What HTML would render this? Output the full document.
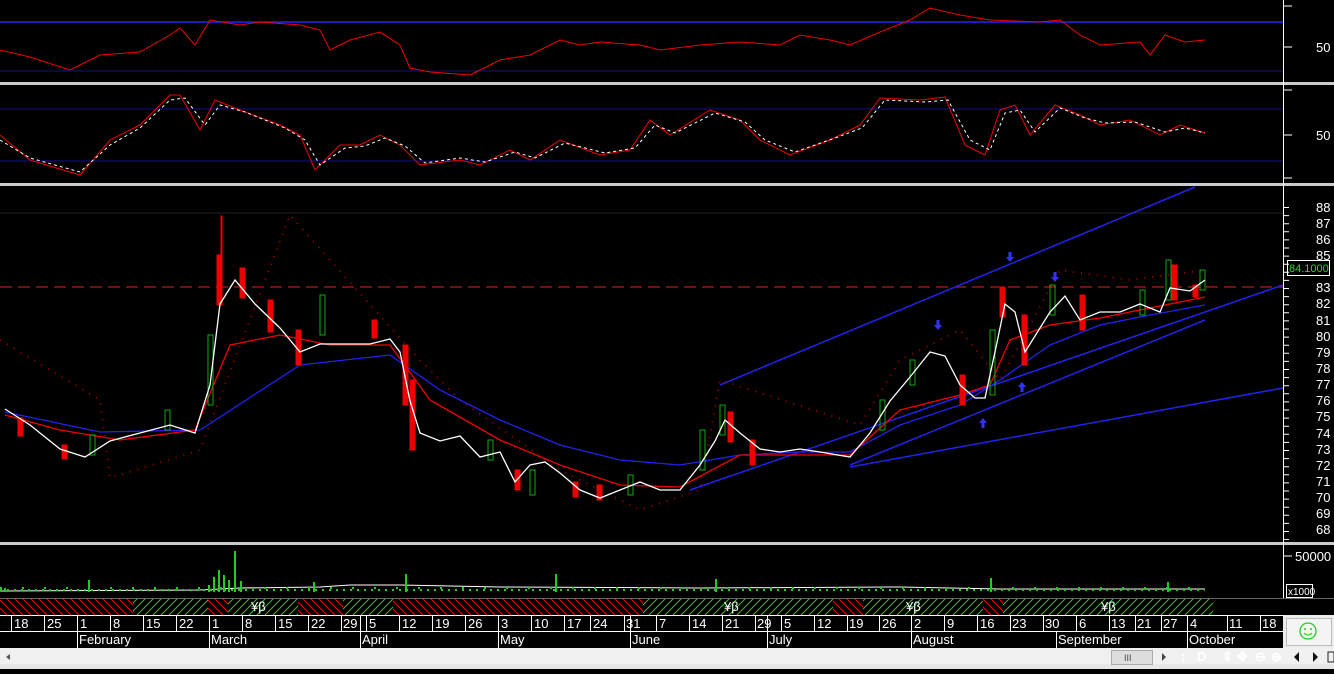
<!DOCTYPE html><html><head><style>
body{margin:0;width:1334px;height:669px;overflow:hidden;background:#000;font-family:"Liberation Sans",sans-serif}
svg text{font-family:"Liberation Sans",sans-serif;font-size:13px;fill:#fff}
</style></head><body>
<svg width="1334" height="669" viewBox="0 0 1334 669" xmlns="http://www.w3.org/2000/svg">
<defs>
<pattern id="hr" width="8" height="8" patternUnits="userSpaceOnUse"><rect width="8" height="8" fill="#000"/><path d="M0 0L8 8M-4 4L4 12M4 -4L12 4" stroke="#e00" stroke-width="1"/></pattern>
<pattern id="hg" width="8" height="8" patternUnits="userSpaceOnUse"><rect width="8" height="8" fill="#000"/><path d="M8 0L0 8M4 -4L-4 4M12 4L4 12" stroke="#2c2" stroke-width="1"/></pattern>
<g id="ad"><path d="M-1.5 0H1.5V5H4L0 10L-4 5H-1.5Z" fill="#33f"/></g>
</defs>
<rect width="1334" height="669" fill="#000"/>
<rect x="0" y="82" width="1334" height="3" fill="#ccc"/>
<rect x="0" y="183" width="1334" height="3" fill="#ccc"/>
<rect x="0" y="542" width="1334" height="3" fill="#ccc"/>
<line x1="1283.5" y1="0" x2="1283.5" y2="598" stroke="#fff"/>
<line x1="0" y1="22" x2="1283" y2="22" stroke="#22f" stroke-width="1.5"/>
<line x1="0" y1="71" x2="1283" y2="71" stroke="#118"/>
<polyline fill="none" stroke="#e00" points="0,50 30,57 70,70 100,55 140,52 170,35 180,28 195,45 210,20 240,25 260,22 300,25 320,30 330,50 350,40 380,32 400,45 410,68 430,72 470,75 500,60 530,55 560,40 580,45 600,42 640,45 660,50 700,45 740,42 780,45 800,35 830,40 850,45 880,32 910,20 930,8 960,15 990,20 1040,22 1060,20 1080,35 1100,45 1140,42 1150,55 1165,35 1185,42 1205,40"/>
<text x="1316" y="52">50</text>
<line x1="0" y1="109" x2="1283" y2="109" stroke="#118"/>
<line x1="0" y1="161" x2="1283" y2="161" stroke="#118"/>
<polyline fill="none" stroke="#e00" points="0,135 30,160 80,175 110,140 140,125 170,95 180,95 200,130 215,100 240,110 280,125 300,135 315,170 340,145 360,145 380,135 400,145 420,165 460,160 480,165 510,150 530,160 560,140 600,155 630,150 650,120 670,135 710,110 740,120 760,140 790,155 830,140 860,125 880,98 920,100 945,97 965,145 985,155 1000,110 1015,105 1030,135 1055,105 1080,115 1100,125 1130,120 1160,135 1180,125 1205,133"/>
<polyline fill="none" stroke="#fff" stroke-dasharray="3,3" points="0,140 30,158 80,172 110,145 140,128 170,100 185,98 205,125 220,105 245,112 285,128 305,140 320,165 345,148 365,146 385,138 405,146 425,163 460,158 485,162 515,152 535,158 565,143 605,153 635,148 655,125 675,133 715,113 745,122 765,140 795,152 835,138 862,128 885,100 925,102 948,100 970,140 990,150 1005,113 1020,110 1035,132 1060,108 1085,118 1105,123 1135,122 1165,132 1185,128 1205,133"/>
<text x="1316" y="140">50</text>
<line x1="0" y1="213" x2="1283" y2="213" stroke="#222"/>
<line x1="0" y1="287" x2="1283" y2="287" stroke="#d22" stroke-dasharray="12,6"/>
<line x1="720" y1="385" x2="1195" y2="187" stroke="#22e" stroke-width="1.5"/>
<line x1="690" y1="490" x2="1283" y2="285" stroke="#22e" stroke-width="1.5"/>
<line x1="850" y1="467" x2="1283" y2="388" stroke="#22e" stroke-width="1.5"/>
<line x1="850" y1="465" x2="1205" y2="320" stroke="#22e" stroke-width="1.5"/>
<polyline fill="none" stroke="#a00" stroke-width="2" stroke-dasharray="1,7" points="0,340 100,400 110,478 200,450 290,215 330,260 420,360 460,400 560,470 640,510 700,490 720,380 860,425 900,360 960,330 1000,380 1060,270 1130,280 1205,270"/>
<polyline fill="none" stroke="#22e" stroke-width="1.3" points="5,412 100,432 200,430 300,365 390,355 440,390 500,420 560,445 620,460 680,465 740,455 800,452 850,452 900,425 960,405 1000,380 1050,345 1100,325 1150,315 1205,305"/>
<polyline fill="none" stroke="#e00" stroke-width="1.3" points="5,415 60,430 120,440 195,430 230,345 280,335 330,345 390,345 430,400 500,440 560,465 620,485 680,487 740,455 800,455 850,455 900,410 960,395 990,385 1010,340 1050,325 1100,318 1205,297"/>
<g stroke-width="1">
<g fill="#e00" stroke="#e00">
<rect x="18" y="418" width="5" height="18"/><rect x="62" y="445" width="5" height="14"/><rect x="217" y="255" width="5" height="50"/><rect x="221" y="216" width="1" height="40"/><rect x="240" y="268" width="5" height="30"/><rect x="268" y="300" width="5" height="32"/><rect x="296" y="330" width="5" height="35"/><rect x="372" y="320" width="5" height="18"/><rect x="403" y="345" width="5" height="60"/><rect x="410" y="380" width="5" height="70"/><rect x="515" y="470" width="5" height="20"/><rect x="573" y="482" width="5" height="15"/><rect x="597" y="485" width="5" height="15"/><rect x="728" y="412" width="5" height="30"/><rect x="750" y="440" width="5" height="25"/><rect x="960" y="375" width="5" height="30"/><rect x="1000" y="287" width="5" height="30"/><rect x="1022" y="315" width="5" height="50"/><rect x="1080" y="295" width="5" height="35"/><rect x="1172" y="265" width="5" height="35"/><rect x="1193" y="285" width="5" height="12"/>
</g>
<g fill="none" stroke="#1a1">
<rect x="90" y="435" width="5" height="20"/><rect x="165" y="410" width="5" height="20"/><rect x="208" y="335" width="5" height="70"/><rect x="320" y="295" width="5" height="40"/><rect x="488" y="440" width="5" height="20"/><rect x="530" y="470" width="5" height="25"/><rect x="628" y="475" width="5" height="20"/><rect x="700" y="430" width="5" height="40"/><rect x="720" y="405" width="5" height="30"/><rect x="880" y="400" width="5" height="30"/><rect x="910" y="360" width="5" height="25"/><rect x="990" y="330" width="5" height="65"/><rect x="1050" y="285" width="5" height="30"/><rect x="1140" y="290" width="5" height="25"/><rect x="1166" y="260" width="5" height="40"/><rect x="1200" y="270" width="5" height="20"/>
</g></g>
<polyline fill="none" stroke="#fff" stroke-width="1.3" points="5,409 30,425 60,449 85,457 110,441 140,433 170,425 195,433 210,385 220,304 235,280 255,304 280,328 300,352 320,344 345,344 370,344 390,339 400,352 410,401 420,433 440,441 460,436 480,457 500,452 515,482 530,465 545,462 560,473 580,490 600,498 620,490 640,482 660,490 680,490 700,465 715,441 725,420 740,433 760,449 780,452 800,449 820,452 850,457 870,433 890,401 910,377 930,352 945,356 960,385 975,398 985,398 995,352 1005,304 1015,312 1025,352 1040,328 1050,312 1065,296 1080,320 1100,312 1120,312 1140,304 1160,312 1170,288 1190,291 1205,280"/>
<use href="#ad" x="938" y="320"/><use href="#ad" x="1010" y="252"/><use href="#ad" x="1055" y="272"/>
<use href="#ad" x="0" y="0" transform="translate(983,428) scale(1,-1)"/><use href="#ad" transform="translate(1022,392) scale(1,-1)"/>
<g style="font-size:12px">
<text x="1316" y="212">88</text><text x="1316" y="228">87</text><text x="1316" y="244">86</text><text x="1316" y="260">85</text><text x="1316" y="292">83</text><text x="1316" y="308">82</text><text x="1316" y="325">81</text><text x="1316" y="341">80</text><text x="1316" y="357">79</text><text x="1316" y="373">78</text><text x="1316" y="389">77</text><text x="1316" y="405">76</text><text x="1316" y="421">75</text><text x="1316" y="438">74</text><text x="1316" y="454">73</text><text x="1316" y="470">72</text><text x="1316" y="486">71</text><text x="1316" y="502">70</text><text x="1316" y="518">69</text><text x="1316" y="534">68</text>
</g>
<rect x="1287.5" y="260.5" width="42" height="15" fill="#000" stroke="#fff"/>
<text x="1289" y="272" style="fill:#2d2;font-size:11px">84.1000</text>
<polyline fill="none" stroke="#fff" points="0,591 200,590 240,588 320,587 350,585 400,585 500,587 700,588 900,587 1000,589 1080,589 1205,589"/>
<g fill="#2c2">
<rect x="4" y="588" width="2" height="4"/><rect x="88" y="580" width="2" height="12"/><rect x="208" y="585" width="2" height="7"/><rect x="213" y="577" width="2" height="15"/><rect x="218" y="570" width="2" height="22"/><rect x="223" y="575" width="2" height="17"/><rect x="228" y="580" width="2" height="12"/><rect x="234" y="551" width="2" height="41"/><rect x="240" y="581" width="2" height="11"/><rect x="313" y="582" width="2" height="10"/><rect x="405" y="574" width="2" height="18"/><rect x="555" y="574" width="2" height="18"/><rect x="715" y="579" width="2" height="13"/><rect x="990" y="578" width="2" height="14"/><rect x="1167" y="582" width="2" height="10"/>
</g>
<g stroke="#2c2" stroke-width="2" stroke-dasharray="2,5"><line x1="0" y1="590" x2="1205" y2="590"/><line x1="0" y1="588" x2="1205" y2="588" stroke-dasharray="2,20"/></g>
<text x="1295" y="561">50000</text>
<rect x="1286.5" y="584.5" width="26" height="13" fill="#000" stroke="#fff"/><text x="1288" y="595" style="font-size:10px">x1000</text>
<rect x="0" y="598" width="1334" height="1" fill="#666"/>
<rect x="0" y="599" width="133" height="16" fill="url(#hr)"/>
<rect x="133" y="599" width="75" height="16" fill="url(#hg)"/>
<rect x="208" y="599" width="20" height="16" fill="url(#hr)"/>
<rect x="228" y="599" width="70" height="16" fill="url(#hg)"/>
<rect x="298" y="599" width="45" height="16" fill="url(#hr)"/>
<rect x="343" y="599" width="50" height="16" fill="url(#hg)"/>
<rect x="393" y="599" width="250" height="16" fill="url(#hr)"/>
<rect x="643" y="599" width="190" height="16" fill="url(#hg)"/>
<rect x="833" y="599" width="30" height="16" fill="url(#hr)"/>
<rect x="863" y="599" width="120" height="16" fill="url(#hg)"/>
<rect x="983" y="599" width="20" height="16" fill="url(#hr)"/>
<rect x="1003" y="599" width="210" height="16" fill="url(#hg)"/>
<g style="font-size:11px"><text x="251" y="611">¥β</text><text x="724" y="611">¥β</text><text x="906" y="611">¥β</text><text x="1101" y="611">¥β</text></g>
<rect x="0" y="615" width="1283" height="33" fill="#000"/>
<line x1="0" y1="615.5" x2="1283" y2="615.5" stroke="#fff"/>
<line x1="0" y1="631.5" x2="1283" y2="631.5" stroke="#fff"/>
<g stroke="#fff">
<line x1="11.5" y1="615" x2="11.5" y2="631"/><line x1="44.5" y1="615" x2="44.5" y2="631"/><line x1="77.5" y1="615" x2="77.5" y2="648"/><line x1="110.5" y1="615" x2="110.5" y2="631"/><line x1="143.5" y1="615" x2="143.5" y2="631"/><line x1="176.5" y1="615" x2="176.5" y2="631"/><line x1="209.5" y1="615" x2="209.5" y2="648"/><line x1="242.5" y1="615" x2="242.5" y2="631"/><line x1="275.5" y1="615" x2="275.5" y2="631"/><line x1="308.5" y1="615" x2="308.5" y2="631"/><line x1="341.5" y1="615" x2="341.5" y2="631"/><line x1="360.5" y1="615" x2="360.5" y2="648"/><line x1="366.5" y1="615" x2="366.5" y2="631"/><line x1="399.5" y1="615" x2="399.5" y2="631"/><line x1="432.5" y1="615" x2="432.5" y2="631"/><line x1="465.5" y1="615" x2="465.5" y2="631"/><line x1="498.5" y1="615" x2="498.5" y2="648"/><line x1="531.5" y1="615" x2="531.5" y2="631"/><line x1="564.5" y1="615" x2="564.5" y2="631"/><line x1="590.5" y1="615" x2="590.5" y2="631"/><line x1="624.5" y1="615" x2="624.5" y2="631"/><line x1="630.5" y1="615" x2="630.5" y2="648"/><line x1="656.5" y1="615" x2="656.5" y2="631"/><line x1="689.5" y1="615" x2="689.5" y2="631"/><line x1="722.5" y1="615" x2="722.5" y2="631"/><line x1="755.5" y1="615" x2="755.5" y2="631"/><line x1="767.5" y1="615" x2="767.5" y2="648"/><line x1="781.5" y1="615" x2="781.5" y2="631"/><line x1="814.5" y1="615" x2="814.5" y2="631"/><line x1="847.5" y1="615" x2="847.5" y2="631"/><line x1="879.5" y1="615" x2="879.5" y2="631"/><line x1="911.5" y1="615" x2="911.5" y2="648"/><line x1="944.5" y1="615" x2="944.5" y2="631"/><line x1="977.5" y1="615" x2="977.5" y2="631"/><line x1="1010.5" y1="615" x2="1010.5" y2="631"/><line x1="1043.5" y1="615" x2="1043.5" y2="631"/><line x1="1056.5" y1="631" x2="1056.5" y2="648"/><line x1="1076.5" y1="615" x2="1076.5" y2="631"/><line x1="1109.5" y1="615" x2="1109.5" y2="631"/><line x1="1135.5" y1="615" x2="1135.5" y2="631"/><line x1="1161.5" y1="615" x2="1161.5" y2="631"/><line x1="1187.5" y1="615" x2="1187.5" y2="648"/><line x1="1227.5" y1="615" x2="1227.5" y2="631"/><line x1="1260.5" y1="615" x2="1260.5" y2="631"/>
</g>
<g><text x="14" y="628">18</text><text x="47" y="628">25</text><text x="80" y="628">1</text><text x="113" y="628">8</text><text x="146" y="628">15</text><text x="179" y="628">22</text><text x="212" y="628">1</text><text x="245" y="628">8</text><text x="278" y="628">15</text><text x="311" y="628">22</text><text x="343" y="628">29</text><text x="369" y="628">5</text><text x="402" y="628">12</text><text x="435" y="628">19</text><text x="468" y="628">26</text><text x="501" y="628">3</text><text x="534" y="628">10</text><text x="567" y="628">17</text><text x="593" y="628">24</text><text x="626" y="628">31</text><text x="659" y="628">7</text><text x="692" y="628">14</text><text x="725" y="628">21</text><text x="757" y="628">29</text><text x="784" y="628">5</text><text x="817" y="628">12</text><text x="849" y="628">19</text><text x="882" y="628">26</text><text x="914" y="628">2</text><text x="947" y="628">9</text><text x="980" y="628">16</text><text x="1012" y="628">23</text><text x="1045" y="628">30</text><text x="1079" y="628">6</text><text x="1111" y="628">13</text><text x="1137" y="628">21</text><text x="1163" y="628">27</text><text x="1190" y="628">4</text><text x="1229" y="628">11</text><text x="1262" y="628">18</text></g>
<g><text x="79" y="644">February</text><text x="211" y="644">March</text><text x="362" y="644">April</text><text x="500" y="644">May</text><text x="632" y="644">June</text><text x="769" y="644">July</text><text x="913" y="644">August</text><text x="1058" y="644">September</text><text x="1189" y="644">October</text></g>
<rect x="1283" y="615" width="51" height="33" fill="#ececec"/>
<rect x="1286.5" y="618.5" width="45" height="27" fill="#f4f4f4" stroke="#bbb"/>
<circle cx="1308" cy="631" r="8" fill="none" stroke="#2c2" stroke-width="1.3"/>
<circle cx="1305" cy="629" r="1" fill="#2c2"/><circle cx="1311" cy="629" r="1" fill="#2c2"/>
<path d="M1304 633Q1308 637 1312 633" fill="none" stroke="#2c2"/>
<rect x="0" y="648" width="1334" height="21" fill="#f0f0f0"/>
<rect x="0" y="664" width="1334" height="5" fill="#e6e6e6"/>
<path d="M10 654L6 657L10 660Z" fill="#555"/>
<rect x="1111.5" y="650.5" width="41" height="14" fill="#ddd" stroke="#aaa"/>
<text x="1124" y="661" style="fill:#444;font-size:9px">III</text>
<path d="M1162 653L1166 657L1162 661Z" fill="#444"/>
<g style="fill:#222;font-size:12px;font-weight:bold"><text x="1180" y="661">↕</text><text x="1197" y="661">D</text><text x="1222" y="661">⇕</text><text x="1237" y="661">✥</text><text x="1255" y="661">⊖</text><text x="1271" y="661">⊕</text></g>
<path d="M1299 652L1294 657L1299 662Z M1313 652L1318 657L1313 662Z" fill="#111"/>
<rect x="1328" y="652" width="6" height="10" fill="none" stroke="#222"/>
<g stroke="#fff"><line x1="1283" y1="6" x2="1292" y2="6"/><line x1="1283" y1="47" x2="1292" y2="47"/><line x1="1283" y1="90" x2="1292" y2="90"/><line x1="1283" y1="135" x2="1292" y2="135"/><line x1="1283" y1="178" x2="1292" y2="178"/><line x1="1283" y1="556" x2="1292" y2="556"/></g>
<g stroke="#fff" stroke-dasharray="1,7.1"><line x1="1286" y1="207" x2="1286" y2="540" stroke-width="6"/></g>
</svg>
</body></html>
